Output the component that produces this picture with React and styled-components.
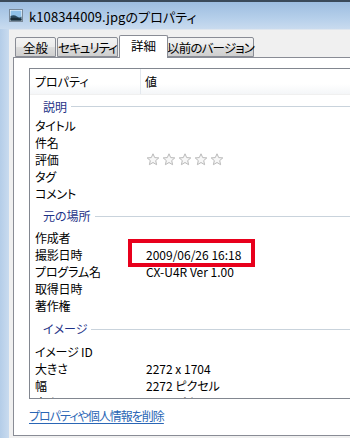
import React from "react";
import styled, { createGlobalStyle } from "styled-components";

const Global = createGlobalStyle`
  html, body { margin: 0; padding: 0; background: #f0f0f0; }
  body { font-family: "Noto Sans CJK JP", "Noto Sans", sans-serif; font-feature-settings: "palt"; }
`;

const Window = styled.div`
  width: 350px;
  height: 438px;
  overflow: hidden;
  display: flex;
  flex-direction: column;
  background: linear-gradient(90deg, #b4cde8 0px, #c9dbef 9px);
  border-top: 2px solid #3a4a5a;
  box-sizing: border-box;
`;

const TitleBar = styled.div`
  height: 27px;
  display: flex;
  align-items: center;
  gap: 6px;
  padding-left: 9px;
  background: linear-gradient(180deg, #9dbde0 0%, #b5cfea 60%, #c9dbef 100%);
  flex-shrink: 0;
`;

const TitleText = styled.span`
  font-size: 13px;
  color: #000;
  letter-spacing: 0.1px;
  margin-top: 1px;
`;

const Client = styled.div`
  flex: 1;
  margin-left: 9px;
  background: #f0f0f0;
  display: flex;
  flex-direction: column;
  padding: 0 0 2px 0;
  border-top: 1px solid #dfe6ee;
`;

const TabStrip = styled.div`
  height: 27px;
  display: flex;
  align-items: flex-end;
  padding-left: 6px;
  position: relative;
  z-index: 1;
`;

const Tab = styled.div`
  box-sizing: border-box;
  height: ${(p) => (p.$active ? "23px" : "20px")};
  width: ${(p) => p.$w}px;
  flex: none;
  padding: 0;
  white-space: nowrap;
  margin: ${(p) => (p.$active ? "0 -2px -1px -2px" : "0")};
  display: flex;
  align-items: center;
  justify-content: center;
  font-size: 12.5px;
  letter-spacing: ${(p) => p.$ls}px;
  color: #000;
  border: 1px solid #898c95;
  border-bottom: ${(p) => (p.$active ? "none" : "1px solid #898c95")};
  border-radius: 2px 2px 0 0;
  background: ${(p) =>
    p.$active ? "#ffffff" : "linear-gradient(180deg, #f3f3f3 0%, #ebebeb 50%, #dddddd 51%, #cfcfcf 100%)"};
  position: relative;
  z-index: ${(p) => (p.$active ? 2 : 1)};
  padding-bottom: ${(p) => (p.$active ? "3px" : "0")};
  & + & { margin-left: ${(p) => (p.$active ? "-2px" : "1px")}; }
`;

const Panel = styled.div`
  flex: 1;
  margin-left: 4px;
  background: #fff;
  border: 1px solid #898c95;
  border-right: none;
  display: flex;
  flex-direction: column;
  padding: 10px 0 0 15px;
`;

const ListBox = styled.div`
  height: 329px;
  border: 1px solid #828790;
  border-right: none;
  overflow: hidden;
  position: relative;
  font-size: 12px;
  color: #000;
  flex-shrink: 0;
`;

const HeaderRow = styled.div`
  height: 26px;
  display: flex;
  align-items: center;
  background: linear-gradient(180deg, #ffffff 0%, #ffffff 60%, #f4f6f8 100%);
  border-bottom: 1px solid #f0f0f0;
  box-sizing: border-box;
`;

const HeaderCell = styled.div`
  height: 100%;
  display: flex;
  align-items: center;
  width: ${(p) => (p.$w ? `${p.$w}px` : "auto")};
  padding-left: ${(p) => p.$pl}px;
  box-sizing: border-box;
  border-right: ${(p) => (p.$divider ? "1px solid #e3e8ee" : "none")};
  flex: ${(p) => (p.$w ? "none" : "1")};
`;

const Section = styled.div`
  height: ${(p) => p.$h}px;
  display: flex;
  align-items: center;
  gap: 4px;
  padding-left: 13px;
  color: #1e3287;
  font-size: 12px;
  &::after {
    content: "";
    flex: 1;
    height: 1px;
    background: #c9d3dc;
    margin-top: 1px;
  }
`;

const Row = styled.div`
  height: 17px;
  display: flex;
  align-items: center;
  white-space: nowrap;
`;

const Label = styled.div`
  width: 111px;
  padding-left: 5px;
  box-sizing: border-box;
  letter-spacing: -0.2px;
`;

const Value = styled.div`
  padding-left: 5px;
  display: flex;
  align-items: center;
  gap: 2px;
  letter-spacing: 0px;
`;

const Highlight = styled.div`
  position: absolute;
  left: 98px;
  top: 170px;
  width: 127px;
  height: 28px;
  box-sizing: border-box;
  border: 4px solid #e8001c;
  pointer-events: none;
`;

const Link = styled.a`
  margin-top: 10px;
  font-size: 12px;
  letter-spacing: -1px;
  color: #2a66b5;
  text-decoration: underline;
  text-underline-offset: 2px;
  line-height: 14px;
  align-self: flex-start;
  cursor: pointer;
`;

const Star = () => (
  <svg width="14" height="13" viewBox="0 0 14 13">
    <path
      d="M7 0.8 L8.7 4.6 L12.8 4.9 L9.7 7.6 L10.6 11.7 L7 9.5 L3.4 11.7 L4.3 7.6 L1.2 4.9 L5.3 4.6 Z"
      fill="#f7f7f7"
      stroke="#b9b9b9"
      strokeWidth="1"
      strokeLinejoin="round"
    />
  </svg>
);

const FileIcon = () => (
  <svg width="14" height="13" viewBox="0 0 14 13">
    <rect x="0.5" y="0.5" width="13" height="12" fill="#fff" stroke="#7a8a9a" />
    <rect x="1.5" y="1.5" width="11" height="10" fill="#8fc0e8" />
    <path d="M1.5 7 Q5 5.5 8 7.5 T12.5 7.5 V11.5 H1.5 Z" fill="#2c4a5e" />
    <path d="M1.5 9 Q6 8 12.5 10 V11.5 H1.5 Z" fill="#1a2c38" />
  </svg>
);

const rows1 = [["タイトル"], ["件名"], ["評価", "stars"], ["タグ"], ["コメント"]];
const rows2 = [["作成者"], ["撮影日時", "2009/06/26 16:18"], ["プログラム名", "CX-U4R Ver 1.00"], ["取得日時"], ["著作権"]];
const rows3 = [["イメージ ID"], ["大きさ", "2272 x 1704"], ["幅", "2272 ピクセル"], ["高さ", "1704 ピクセル"]];

const renderRows = (rows) =>
  rows.map(([l, v]) => (
    <Row key={l}>
      <Label>{l}</Label>
      <Value>
        {v === "stars" ? (
          <>
            <Star />
            <Star />
            <Star />
            <Star />
            <Star />
          </>
        ) : (
          v
        )}
      </Value>
    </Row>
  ));

export default function App() {
  return (
    <>
      <Global />
      <Window>
        <TitleBar>
          <FileIcon />
          <TitleText>k108344009.jpgのプロパティ</TitleText>
        </TitleBar>
        <Client>
          <TabStrip>
            <Tab $w={41} $ls={0}>全般</Tab>
            <Tab $w={61} $ls={-1}>セキュリティ</Tab>
            <Tab $w={49} $ls={0} $active>詳細</Tab>
            <Tab $w={87} $ls={-0.8}>以前のバージョン</Tab>
          </TabStrip>
          <Panel>
            <ListBox>
              <HeaderRow>
                <HeaderCell $w={111} $pl={5} $divider>プロパティ</HeaderCell>
                <HeaderCell $pl={4}>値</HeaderCell>
              </HeaderRow>
              <Section $h={22}>説明</Section>
              {renderRows(rows1)}
              <Section $h={27}>元の場所</Section>
              {renderRows(rows2)}
              <Section $h={29}>イメージ</Section>
              {renderRows(rows3)}
              <Highlight />
            </ListBox>
            <Link>プロパティや個人情報を削除</Link>
          </Panel>
        </Client>
      </Window>
    </>
  );
}
